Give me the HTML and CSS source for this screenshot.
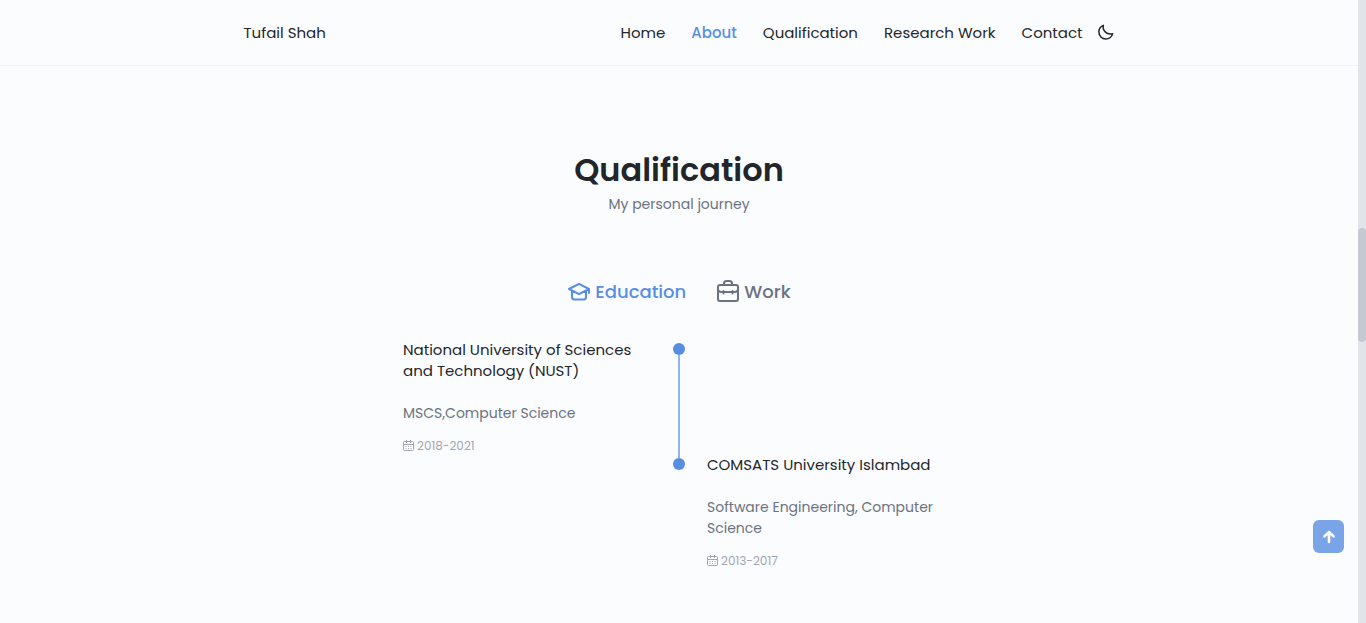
FILE: index.html
```html
<!DOCTYPE html>
<html lang="en">
<head>
<meta charset="utf-8">
<meta name="viewport" content="width=device-width, initial-scale=1">
<title>Tufail Shah</title>
<link rel="stylesheet" href="styles.css">
</head>
<body>
<div class="page">
  <header class="header">
    <nav class="nav">
      <a class="nav-logo" href="#home">Tufail Shah</a>
      <div class="nav-menu">
        <a class="nav-link" href="#home">Home</a>
        <a class="nav-link active" href="#about">About</a>
        <a class="nav-link" href="#qualification">Qualification</a>
        <a class="nav-link" href="#research">Research Work</a>
        <a class="nav-link" href="#contact">Contact</a>
      </div>
      <button class="theme-button" type="button" aria-label="Toggle dark theme">
        <svg width="18" height="18" viewBox="0 0 24 24" fill="none" stroke="currentColor" stroke-width="2" stroke-linejoin="round"><path d="M8.500 3.200C6.800 9.500 12.500 16.200 21 14.200C19.800 18.200 16.300 21.200 11.800 21.200C6.500 21.200 2.500 17.200 2.500 12C2.500 8 5 4.600 8.500 3.200Z"/></svg>
      </button>
    </nav>
  </header>
  <main class="section" id="qualification">
    <h2 class="section-title">Qualification</h2>
    <p class="section-subtitle">My personal journey</p>
    <div class="tabs">
      <button class="tab active" type="button">
        <svg width="24" height="24" viewBox="0 0 24 24" fill="none" stroke="currentColor" stroke-width="2" stroke-linejoin="round" stroke-linecap="round"><path d="M22 13V9L12 3.800L2 9L12 14.200L22 9M5 11V17Q5 19.500 7.500 19.500H16.500Q19 19.500 19 17V11"/></svg>
        <span>Education</span>
      </button>
      <button class="tab" type="button">
        <svg width="24" height="24" viewBox="0 0 24 24" fill="none" stroke="currentColor" stroke-width="2" stroke-linejoin="round" stroke-linecap="round"><rect x="2" y="5" width="20" height="16" rx="2"/><path d="M8 5V3.500Q8 1 10.500 1H13.500Q16 1 16 3.500V5M2 10Q3 12 5 12H19Q21 12 22 10M7.500 11V13.500M16.500 11V13.500"/></svg>
        <span>Work</span>
      </button>
    </div>
    <div class="timeline">
      <article class="entry">
        <h3 class="entry-title">National University of Sciences and Technology (NUST)</h3>
        <p class="entry-subtitle">MSCS,Computer Science</p>
        <div class="entry-date">
          <svg width="11" height="12" viewBox="0 0 11 12" fill="none" stroke="currentColor" stroke-width="1"><rect x=".5" y="1.500" width="10" height="9" rx="1"/><path d="M1 4.500H10M3.500 0V3M7.500 0V3M2.500 6.500H3.500M5 6.500H6M7.500 6.500H8.500M2.500 8.500H3.500M5 8.500H6M7.500 8.500H8.500"/></svg>
          <span>2018-2021</span>
        </div>
      </article>
      <div class="marker"><span class="dot"></span><span class="line"></span></div>
      <div></div>
      <div></div>
      <div class="marker"><span class="dot"></span></div>
      <article class="entry">
        <h3 class="entry-title">COMSATS University Islambad</h3>
        <p class="entry-subtitle">Software Engineering, Computer Science</p>
        <div class="entry-date">
          <svg width="11" height="12" viewBox="0 0 11 12" fill="none" stroke="currentColor" stroke-width="1"><rect x=".5" y="1.500" width="10" height="9" rx="1"/><path d="M1 4.500H10M3.500 0V3M7.500 0V3M2.500 6.500H3.500M5 6.500H6M7.500 6.500H8.500M2.500 8.500H3.500M5 8.500H6M7.500 8.500H8.500"/></svg>
          <span>2013-2017</span>
        </div>
      </article>
    </div>
  </main>
</div>
<div class="scroll-track" aria-hidden="true"><div class="scroll-thumb"></div></div>
<a class="scroll-up" href="#home" aria-label="Back to top">
  <svg width="18" height="18" viewBox="0 0 24 24" fill="none" stroke="currentColor" stroke-width="3.500" stroke-linecap="round" stroke-linejoin="round"><path d="M12 18.500V5.500M6 11L12 5.500L18 11"/></svg>
</a>
</body>
</html>
```

FILE: styles.css
```css
* { box-sizing: border-box; margin: 0; padding: 0; }

body {
  display: flex;
  min-height: 100vh;
  background: #fbfcfe;
  color: #22262a;
  font: 400 14px/21px Poppins, Inter, "Open Sans", sans-serif;
}

a { color: inherit; text-decoration: none; }
button { border: 0; background: none; color: inherit; font: inherit; cursor: pointer; }
svg { display: block; flex: none; }

.page { flex: 1; }

.header {
  padding: 0 24px 1px;
  border-bottom: 1px solid #f0f2f5;
}
.nav {
  display: flex;
  align-items: center;
  max-width: 871px;
  height: 64px;
  margin: 0 auto;
  font-size: 15px;
}
.nav-logo { margin-right: auto; }
.nav-menu { display: flex; gap: 26px; margin-right: 14px; }
.nav-link.active { color: #588ee2; font-weight: 500; }

.section { padding: 80px 24px 32px; }
.section-title {
  font-size: 32px;
  font-weight: 600;
  line-height: 48px;
  text-align: center;
}
.section-subtitle { color: #6b7280; text-align: center; }

.tabs {
  display: flex;
  justify-content: center;
  gap: 30px;
  margin: 64px 0 34px;
}
.tab {
  display: flex;
  align-items: center;
  gap: 4px;
  color: #6b7280;
  font-size: 18px;
  font-weight: 500;
  line-height: 26px;
}
.tab.active { color: #588ee2; }

.timeline {
  display: grid;
  grid-template-columns: 1fr 12px 1fr;
  column-gap: 22px;
  max-width: 552px;
  margin: 0 auto;
}
.entry-title { font-size: 15px; font-weight: 400; }
.entry-subtitle { margin: 22px 0 14px; color: #6b7280; }
.entry-date {
  display: flex;
  align-items: center;
  gap: 3px;
  color: #a2a6b0;
  font-size: 12px;
  line-height: 16px;
}
.marker {
  display: flex;
  flex-direction: column;
  align-items: center;
  padding-top: 4px;
  margin-bottom: -4px;
}
.dot { width: 12px; height: 12px; border-radius: 50%; background: #588ee2; }
.line { flex: 1; width: 2px; background: #8fb4ec; }

.scroll-track {
  flex: none;
  width: 8px;
  padding-top: 228px;
  background: #e1e4e9;
}
.scroll-thumb { height: 114px; border-radius: 4px; background: #c5c9d1; }

.scroll-up {
  position: fixed;
  right: 22px;
  bottom: 70px;
  display: grid;
  place-items: center;
  width: 31px;
  height: 33px;
  border-radius: 6px;
  background: #79a4e7;
  color: #fff;
}
```
